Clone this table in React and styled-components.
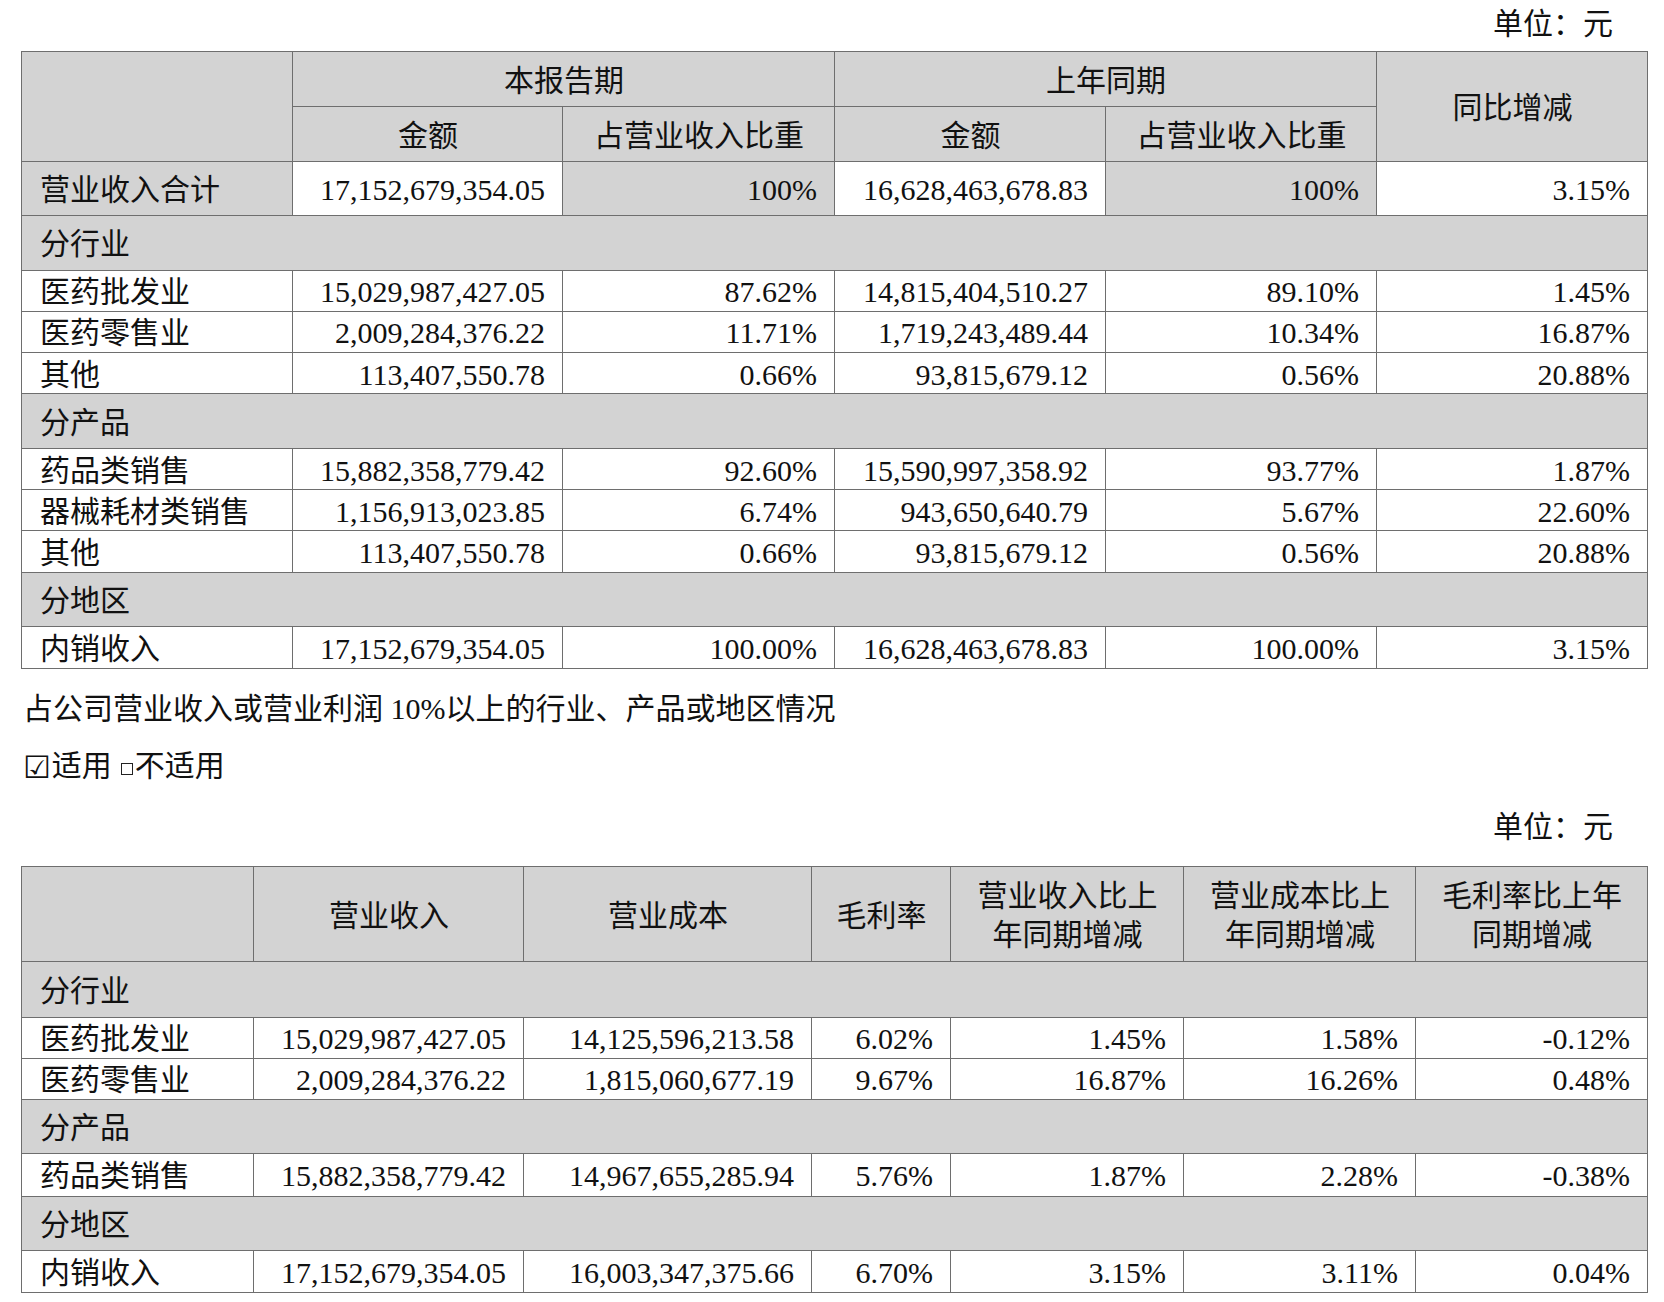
import React from 'react';
import styled, { createGlobalStyle } from 'styled-components';

const GlobalStyle = createGlobalStyle`
  html, body {
    margin: 0;
    padding: 0;
    background: #ffffff;
  }
  body {
    font-family: "Liberation Serif", "Noto Sans CJK SC", serif;
    color: #111111;
  }
`;

const Page = styled.div`
  width: 1664px;
  box-sizing: border-box;
  padding: 0 17px 0 21px;
  font-size: 30px;
`;

const Unit = styled.div`
  height: ${(p) => p.h}px;
  line-height: ${(p) => p.lh}px;
  text-align: right;
  padding-right: 34px;
`;

const Table = styled.table`
  width: 100%;
  border-collapse: collapse;
  table-layout: fixed;
  border: 1.5px solid #5a5a5a;
`;

const Row = styled.tr`
  height: ${(p) => p.h}px;
`;

const Cell = styled.td`
  border: 1.5px solid #6e6e6e;
  padding: 3px 17px 0 18px;
  background: ${(p) => (p.gray ? '#d3d3d3' : '#ffffff')};
  text-align: ${(p) => p.align || 'right'};
  line-height: ${(p) => p.lh || 32}px;
  white-space: nowrap;
  vertical-align: middle;
`;

const Note = styled.div`
  line-height: ${(p) => p.lh}px;
  height: ${(p) => p.lh}px;
  padding-left: 2px;
`;

const CheckMark = styled.span`
  font-family: "DejaVu Sans", sans-serif;
  font-size: 31px;
  line-height: 30px;
  display: inline-block;
  margin-right: 1px;
  vertical-align: -2px;
`;

const SmallBox = styled.span`
  display: inline-block;
  width: 10px;
  height: 10px;
  border: 1.5px solid #222;
  margin: 0 2px 0 9px;
  vertical-align: 1px;
`;

const t1 = [
  { section: '分行业' },
  { label: '医药批发业', v: ['15,029,987,427.05', '87.62%', '14,815,404,510.27', '89.10%', '1.45%'] },
  { label: '医药零售业', v: ['2,009,284,376.22', '11.71%', '1,719,243,489.44', '10.34%', '16.87%'] },
  { label: '其他', v: ['113,407,550.78', '0.66%', '93,815,679.12', '0.56%', '20.88%'] },
  { section: '分产品' },
  { label: '药品类销售', v: ['15,882,358,779.42', '92.60%', '15,590,997,358.92', '93.77%', '1.87%'] },
  { label: '器械耗材类销售', v: ['1,156,913,023.85', '6.74%', '943,650,640.79', '5.67%', '22.60%'] },
  { label: '其他', v: ['113,407,550.78', '0.66%', '93,815,679.12', '0.56%', '20.88%'] },
  { section: '分地区' },
  { label: '内销收入', v: ['17,152,679,354.05', '100.00%', '16,628,463,678.83', '100.00%', '3.15%'] },
];

const t2 = [
  { section: '分行业', h: 56 },
  { label: '医药批发业', h: 41, v: ['15,029,987,427.05', '14,125,596,213.58', '6.02%', '1.45%', '1.58%', '-0.12%'] },
  { label: '医药零售业', h: 41, v: ['2,009,284,376.22', '1,815,060,677.19', '9.67%', '16.87%', '16.26%', '0.48%'] },
  { section: '分产品', h: 54 },
  { label: '药品类销售', h: 43, v: ['15,882,358,779.42', '14,967,655,285.94', '5.76%', '1.87%', '2.28%', '-0.38%'] },
  { section: '分地区', h: 54 },
  { label: '内销收入', h: 42, v: ['17,152,679,354.05', '16,003,347,375.66', '6.70%', '3.15%', '3.11%', '0.04%'] },
];

function BodyRows({ rows, span, dataH }) {
  return rows.map((r, i) =>
    r.section ? (
      <Row key={i} h={r.h || 54.5}>
        <Cell gray align="left" colSpan={span}>{r.section}</Cell>
      </Row>
    ) : (
      <Row key={i} h={r.h || dataH}>
        <Cell align="left">{r.label}</Cell>
        {r.v.map((x, j) => (
          <Cell key={j}>{x}</Cell>
        ))}
      </Row>
    )
  );
}

function RevenueTable() {
  return (
    <Table>
      <colgroup>
        <col style={{ width: 271 }} />
        <col style={{ width: 270 }} />
        <col style={{ width: 272 }} />
        <col style={{ width: 271 }} />
        <col style={{ width: 271 }} />
        <col style={{ width: 271 }} />
      </colgroup>
      <tbody>
        <Row h={55}>
          <Cell gray rowSpan={2} />
          <Cell gray align="center" colSpan={2}>本报告期</Cell>
          <Cell gray align="center" colSpan={2}>上年同期</Cell>
          <Cell gray align="center" rowSpan={2}>同比增减</Cell>
        </Row>
        <Row h={55}>
          <Cell gray align="center">金额</Cell>
          <Cell gray align="center">占营业收入比重</Cell>
          <Cell gray align="center">金额</Cell>
          <Cell gray align="center">占营业收入比重</Cell>
        </Row>
        <Row h={54}>
          <Cell gray align="left">营业收入合计</Cell>
          <Cell>17,152,679,354.05</Cell>
          <Cell gray>100%</Cell>
          <Cell>16,628,463,678.83</Cell>
          <Cell gray>100%</Cell>
          <Cell>3.15%</Cell>
        </Row>
        <BodyRows rows={t1} span={6} dataH={41.3} />
      </tbody>
    </Table>
  );
}

function MarginTable() {
  const heads = [
    ['营业收入'],
    ['营业成本'],
    ['毛利率'],
    ['营业收入比上', '年同期增减'],
    ['营业成本比上', '年同期增减'],
    ['毛利率比上年', '同期增减'],
  ];
  return (
    <Table>
      <colgroup>
        <col style={{ width: 232 }} />
        <col style={{ width: 270 }} />
        <col style={{ width: 288 }} />
        <col style={{ width: 139 }} />
        <col style={{ width: 233 }} />
        <col style={{ width: 232 }} />
        <col style={{ width: 232 }} />
      </colgroup>
      <tbody>
        <Row h={95}>
          <Cell gray />
          {heads.map((h, i) => (
            <Cell key={i} gray align="center" lh={39}>
              {h.map((line, j) => (
                <React.Fragment key={j}>
                  {j > 0 && <br />}
                  {line}
                </React.Fragment>
              ))}
            </Cell>
          ))}
        </Row>
        <BodyRows rows={t2} span={7} dataH={42} />
      </tbody>
    </Table>
  );
}

export default function App() {
  return (
    <>
      <GlobalStyle />
      <Page>
        <Unit h={51} lh={48}>单位：元</Unit>
        <RevenueTable />
        <Note lh={80}>占公司营业收入或营业利润 10%以上的行业、产品或地区情况</Note>
        <Note lh={34}>
          <CheckMark>☑</CheckMark>适用<SmallBox />不适用
        </Note>
        <Unit h={83} lh={88}>单位：元</Unit>
        <MarginTable />
      </Page>
    </>
  );
}
